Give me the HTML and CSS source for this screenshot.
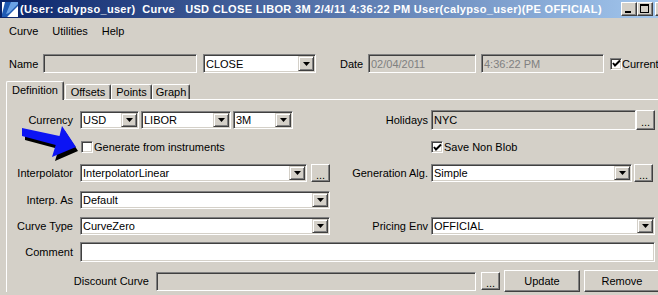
FILE: index.html
```html
<!DOCTYPE html>
<html>
<head>
<meta charset="utf-8">
<link rel="stylesheet" href="styles.css">
</head>
<body>
<div class="titlebar">
  <svg class="app-icon" width="16" height="15" viewBox="0 0 16 15">
    <rect x="0" y="0" width="16" height="15" fill="#ffffff"/>
    <polygon points="3,0 16,0 16,4 5,15 0,15 0,12" fill="#1e5ab4"/>
    <polygon points="9,0 16,0 16,2 7,11 4,12" fill="#6aa2e6"/>
    <polygon points="0,15 0,12 2,14 6,15" fill="#1e5ab4"/>
  </svg>
  <div class="title">(User: calypso_user)  Curve   USD CLOSE LIBOR 3M 2/4/11 4:36:22 PM User(calypso_user)(PE OFFICIAL)</div>
  <div class="winbtns">
    <div class="wbtn"><span class="g-min"></span></div>
    <div class="wbtn"><span class="g-max"></span></div>
    <div class="wbtn close"></div>
  </div>
</div>

<div class="menubar">
  <span class="menu">Curve</span>
  <span class="menu">Utilities</span>
  <span class="menu">Help</span>
</div>

<div class="namerow">
  <span class="nm-lab">Name</span>
  <div class="field gray w-name"></div>
  <div class="field combo w-close"><span class="val">CLOSE</span><span class="arr"><svg width="7" height="4" viewBox="0 0 7 4"><polygon points="0,0 7,0 3.5,4" fill="#000"/></svg></span></div>
  <span class="dt-lab">Date</span>
  <div class="field gray w-date"><span class="val dis">02/04/2011</span></div>
  <div class="field gray w-time"><span class="val dis">4:36:22 PM</span></div>
  <span class="chk on cur-chk"><svg width="9" height="9" viewBox="0 0 9 9"><polyline points="1,4 3,6.5 8,1.5" fill="none" stroke="#000" stroke-width="2"/></svg></span>
  <span class="cur-lab">Current</span>
</div>

<div class="tabs">
  <div class="tab sel">Definition</div>
  <div class="tab t-off">Offsets</div>
  <div class="tab t-pts">Points</div>
  <div class="tab t-gr">Graph</div>
</div>

<div class="panel">
  <div class="row r1">
    <span class="lab">Currency</span>
    <div class="lcol">
      <div class="field combo w-usd"><span class="val">USD</span><span class="arr"><svg width="7" height="4" viewBox="0 0 7 4"><polygon points="0,0 7,0 3.5,4" fill="#000"/></svg></span></div>
      <div class="field combo w-libor"><span class="val">LIBOR</span><span class="arr"><svg width="7" height="4" viewBox="0 0 7 4"><polygon points="0,0 7,0 3.5,4" fill="#000"/></svg></span></div>
      <div class="field combo w-3m"><span class="val">3M</span><span class="arr"><svg width="7" height="4" viewBox="0 0 7 4"><polygon points="0,0 7,0 3.5,4" fill="#000"/></svg></span></div>
    </div>
    <span class="rlab">Holidays</span>
    <div class="rcol">
      <div class="field gray w-hol"><span class="val">NYC</span></div>
      <div class="btn dots tall">...</div>
    </div>
  </div>

  <div class="row r2">
    <span class="lab"></span>
    <div class="lcol">
      <span class="chk gen-chk"></span><span class="chk-lab">Generate from instruments</span>
    </div>
    <span class="rlab"></span>
    <div class="rcol">
      <span class="chk on"><svg width="9" height="9" viewBox="0 0 9 9"><polyline points="1,4 3,6.5 8,1.5" fill="none" stroke="#000" stroke-width="2"/></svg></span><span class="chk-lab">Save Non Blob</span>
    </div>
  </div>

  <div class="row r3">
    <span class="lab">Interpolator</span>
    <div class="lcol">
      <div class="field combo w-interp"><span class="val">InterpolatorLinear</span><span class="arr"><svg width="7" height="4" viewBox="0 0 7 4"><polygon points="0,0 7,0 3.5,4" fill="#000"/></svg></span></div>
      <div class="btn dots gap4">...</div>
    </div>
    <span class="rlab">Generation Alg.</span>
    <div class="rcol">
      <div class="field combo w-gen"><span class="val">Simple</span><span class="arr"><svg width="7" height="4" viewBox="0 0 7 4"><polygon points="0,0 7,0 3.5,4" fill="#000"/></svg></span></div>
      <div class="btn dots gap2">...</div>
    </div>
  </div>

  <div class="row r4">
    <span class="lab">Interp. As</span>
    <div class="lcol">
      <div class="field combo w-full"><span class="val">Default</span><span class="arr"><svg width="7" height="4" viewBox="0 0 7 4"><polygon points="0,0 7,0 3.5,4" fill="#000"/></svg></span></div>
    </div>
  </div>

  <div class="row r5">
    <span class="lab">Curve Type</span>
    <div class="lcol">
      <div class="field combo w-full"><span class="val">CurveZero</span><span class="arr"><svg width="7" height="4" viewBox="0 0 7 4"><polygon points="0,0 7,0 3.5,4" fill="#000"/></svg></span></div>
    </div>
    <span class="rlab">Pricing Env</span>
    <div class="rcol">
      <div class="field combo w-rfull"><span class="val">OFFICIAL</span><span class="arr"><svg width="7" height="4" viewBox="0 0 7 4"><polygon points="0,0 7,0 3.5,4" fill="#000"/></svg></span></div>
    </div>
  </div>

  <div class="row r6">
    <span class="lab">Comment</span>
    <div class="field w-comment"></div>
  </div>

  <div class="row r7">
    <span class="lab dc-lab">Discount Curve</span>
    <div class="field gray w-dc"></div>
    <div class="btn dots b-dc">...</div>
    <div class="btn big b-upd">Update</div>
    <div class="btn big b-rem">Remove</div>
  </div>
</div>

<svg class="pointer" width="100" height="170" viewBox="0 0 100 170">
  <polygon points="25,132 62.5,140 65,131 78,151 55,161 58.7,149 25,140" fill="#000"/>
  <polygon points="22,128 59.5,136 62,126 76,147 52,157 55.7,145 22,136" fill="#0c14f4"/>
</svg>
</body>
</html>
```

FILE: styles.css
```css
* { box-sizing: border-box; margin: 0; padding: 0; }
html, body { width: 658px; height: 295px; overflow: hidden; }
body {
  background: #d4d0c8;
  font-family: "Liberation Sans", Arial, sans-serif;
  font-size: 11px;
  color: #000;
  position: relative;
}

/* title bar */
.titlebar {
  width: 671px;
  height: 18px;
  background: linear-gradient(to right, #0a246a, #a6caf0);
  display: flex;
  align-items: center;
  padding-left: 2px;
  color: #fff;
}
.app-icon { flex: none; margin-right: 2px; }
.title {
  flex: 1;
  min-width: 0;
  white-space: pre;
  overflow: hidden;
  font-weight: bold;
  font-size: 11px;
  letter-spacing: 0.33px;
}
.winbtns { flex: none; display: flex; width: 50px; }
.wbtn {
  width: 16px;
  height: 14px;
  background: #d4d0c8;
  border: 1px solid;
  border-color: #fff #404040 #404040 #fff;
  box-shadow: inset -1px -1px #808080;
  position: relative;
}
.wbtn.close { margin-left: 2px; }
.g-min {
  position: absolute;
  left: 3px; top: 8px;
  width: 6px; height: 2px;
  background: #000;
}
.g-max {
  position: absolute;
  left: 2px; top: 1px;
  width: 9px; height: 9px;
  border: 1px solid #000;
  border-top-width: 2px;
}

/* menu */
.menubar {
  height: 26px;
  display: flex;
  align-items: center;
  padding-left: 9px;
  gap: 14px;
}

/* generic controls */
.field {
  height: 18px;
  background: #fff;
  border: 1px solid;
  border-color: #808080 #fff #fff #808080;
  box-shadow: inset 1px 1px #404040, inset -1px -1px #d4d0c8;
  padding: 1px;
  display: flex;
  align-items: center;
  flex: none;
}
.field.gray { background: #d4d0c8; }
.val { flex: 1; padding-left: 1px; white-space: nowrap; overflow: hidden; }
.val.dis { color: #808080; }
.arr {
  flex: none;
  width: 16px;
  height: 100%;
  background: #d4d0c8;
  border: 1px solid;
  border-color: #d4d0c8 #404040 #404040 #d4d0c8;
  box-shadow: inset 1px 1px #fff, inset -1px -1px #808080;
  display: flex;
  align-items: center;
  justify-content: center;
}
.arr svg { display: block; }

.btn {
  flex: none;
  background: #d4d0c8;
  border: 1px solid;
  border-color: #fff #404040 #404040 #fff;
  box-shadow: inset -1px -1px #808080;
  display: flex;
  align-items: center;
  justify-content: center;
}
.btn.dots { width: 19px; height: 18px; padding-top: 3px; }
.btn.tall { height: 20px; }
.btn.big { height: 22px; width: 76px; }

.chk {
  flex: none;
  width: 12px;
  height: 12px;
  background: #fff;
  border: 1px solid;
  border-color: #808080 #fff #fff #808080;
  box-shadow: inset 1px 1px #404040, inset -1px -1px #d4d0c8;
  display: flex;
  align-items: center;
  justify-content: center;
}
.chk svg { display: block; }
.chk-lab { margin-left: 1px; white-space: nowrap; }

/* name row */
.namerow {
  height: 19px;
  margin-top: 10px;
  display: flex;
  align-items: center;
  padding-left: 9px;
  white-space: nowrap;
}
.nm-lab { width: 34px; flex: none; }
.w-name { width: 154px; height: 19px; }
.w-close { width: 113px; height: 19px; margin-left: 6px; }
.dt-lab { width: 28px; flex: none; margin-left: 24px; }
.w-date { width: 108px; height: 19px; }
.w-time { width: 123px; height: 19px; margin-left: 5px; }
.cur-chk { margin-left: 6px; }
.cur-lab { margin-left: 0; }

/* tabs */
.tabs {
  height: 18px;
  margin-top: 8px;
  padding-left: 6px;
  display: flex;
  align-items: flex-end;
}
.tab {
  height: 15px;
  background: #d4d0c8;
  border-left: 1px solid #fff;
  border-top: 1px solid #fff;
  border-right: 1px solid #404040;
  box-shadow: inset -1px 0 #808080;
  border-radius: 2px 2px 0 0;
  display: flex;
  align-items: center;
  justify-content: center;
  white-space: nowrap;
}
.tab.sel {
  width: 58px;
  height: 19px;
  margin-bottom: -1px;
  position: relative;
  z-index: 1;
  padding-bottom: 2px;
}
.t-off { width: 46px; margin-left: 1px; }
.t-pts { width: 41px; }
.t-gr { width: 38px; }

/* panel */
.panel {
  margin-left: 6px;
  border-top: 1px solid #fff;
  border-left: 1px solid #fff;
  padding-top: 10px;
}
.row { display: flex; align-items: center; white-space: nowrap; }
.r1 { height: 20px; }
.r2 { height: 12px; margin-top: 11px; }
.r3 { height: 18px; margin-top: 11px; }
.r4 { height: 18px; margin-top: 9px; }
.r5 { height: 18px; margin-top: 8px; }
.r6 { height: 20px; margin-top: 7px; }
.r7 { height: 22px; margin-top: 8px; }

.lab { width: 66px; flex: none; text-align: right; }
.lcol { width: 250px; margin-left: 7px; flex: none; display: flex; align-items: center; }
.rlab { width: 98px; flex: none; text-align: right; }
.rcol { width: 224px; margin-left: 3px; flex: none; display: flex; align-items: center; }

.w-usd { width: 59px; }
.w-libor { width: 90px; margin-left: 2px; }
.w-3m { width: 60px; margin-left: 2px; }
.w-hol { width: 205px; height: 20px; }
.gen-chk { margin-left: 1px; }
.w-interp { width: 227px; }
.gap4 { margin-left: 4px; }
.w-gen { width: 201px; }
.gap2 { margin-left: 2px; }
.w-full { width: 250px; }
.w-rfull { width: 224px; }
.w-comment { width: 575px; height: 20px; margin-left: 7px; }

.dc-lab { width: 142px; }
.w-dc { width: 320px; height: 19px; margin-left: 7px; }
.b-dc { margin-left: 5px; height: 22px; }
.b-upd { margin-left: 4px; }
.b-rem { margin-left: 4px; }

/* annotation arrow overlay */
.pointer {
  position: absolute;
  left: 0;
  top: 0;
  pointer-events: none;
}
```
